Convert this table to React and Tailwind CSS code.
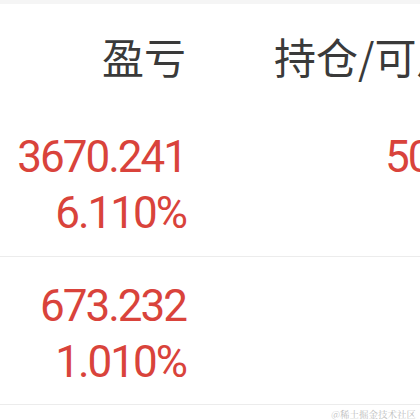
export default function App() {
  const num = "font-['Roboto',sans-serif] text-[44px] leading-[56px] tracking-[-2px] text-[#d9433b]";
  return (
    <div className="w-[420px] h-[420px] overflow-hidden bg-white relative font-['Noto_Sans_CJK_SC',sans-serif]">
      <div className="h-[4px] bg-[#f5f5f5]" />
      <div className="h-[104px] flex items-center">
        <div className="w-[186px] shrink-0 text-right text-[42px] text-[#3a3a3a] leading-none">盈亏</div>
        <div className="pl-[88px] whitespace-nowrap text-[42px] text-[#3a3a3a] leading-none">持仓/可用</div>
      </div>
      <div className="h-[149px] border-b border-[#ececec] flex items-center pt-[6px]">
        <div className="w-[186px] shrink-0 flex flex-col items-end">
          <div className={num}>3670.241</div>
          <div className={num}>6.110%</div>
        </div>
        <div className="pl-[199px] flex flex-col">
          <div className={num + " whitespace-nowrap"}>500</div>
          <div className={num}>&nbsp;</div>
        </div>
      </div>
      <div className="h-[148px] border-b border-[#ececec] flex items-center pt-[6px]">
        <div className="w-[186px] shrink-0 flex flex-col items-end">
          <div className={num}>673.232</div>
          <div className={num}>1.010%</div>
        </div>
      </div>
      <div className="flex justify-end pr-[4px] pt-[2px]">
        <span className="text-[9.5px] leading-[14px] text-[#c0c0c0] font-['Noto_Serif_CJK_SC','Noto_Sans_CJK_SC',serif]">@稀土掘金技术社区</span>
      </div>
    </div>
  );
}
